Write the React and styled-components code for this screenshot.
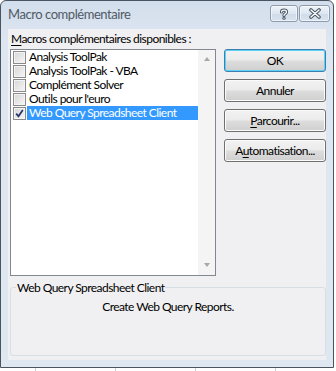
import React from 'react';
import styled, { createGlobalStyle } from 'styled-components';

const Global = createGlobalStyle`
  html, body { margin: 0; padding: 0; }
  body {
    width: 336px; height: 371px; overflow: hidden;
    background-color: #ffffff;
    background-image: repeating-linear-gradient(90deg, transparent 0 35px, #c9d2e0 35px 36px, transparent 36px 80px);
  }
`;

const Window = styled.div`
  box-sizing: border-box;
  width: 334px;
  height: 368px;
  border: 1px solid #4a545e;
  border-radius: 6px 6px 0 0;
  background: linear-gradient(#d3deec, #dde6f1 40px, #dfe7f1);
  display: flex;
  flex-direction: column;
  font-family: Lato, "Liberation Sans", sans-serif;
  font-size: 12px;
  letter-spacing: -0.55px;
  color: #000;
`;

const TitleBar = styled.div`
  height: 28px;
  flex: none;
  display: flex;
  align-items: flex-start;
  padding: 0 3px 0 7px;
`;

const Title = styled.div`
  font-size: 13px;
  letter-spacing: -0.45px;
  line-height: 27px;
  color: #4f5a66;
`;

const Controls = styled.div`
  margin-left: auto;
  margin-top: 4px;
  display: flex;
  gap: 1px;
`;

const CaptionButton = styled.div`
  box-sizing: border-box;
  width: ${p => p.$w}px;
  height: 17px;
  border: 1px solid #8c9bb0;
  border-radius: 3px;
  background: linear-gradient(#eef3f9, #dde6f1 50%, #cfdbea 51%, #d9e3ef);
  box-shadow: inset 0 0 0 1px rgba(255,255,255,0.6);
  display: flex;
  align-items: center;
  justify-content: center;
`;

const Frame = styled.div`
  flex: 1;
  display: flex;
  padding: 0 7px 7px 7px;
`;

const Client = styled.div`
  flex: 1;
  background: #f0f0f2;
  display: flex;
  flex-direction: column;
  padding: 0 0 4px 2px;
`;

const FieldLabel = styled.div`
  margin: 2px 0 3px 1px;
  line-height: 15px;
  height: 15px;
`;

const Key = styled.span`
  text-decoration: underline;
  text-underline-offset: 2px;
`;

const Main = styled.div`
  display: flex;
  gap: 8px;
  height: 227px;
  flex: none;
`;

const ListBox = styled.div`
  box-sizing: border-box;
  width: 206px;
  height: 227px;
  border: 1px solid #828790;
  background: #fff;
  display: flex;
`;

const Items = styled.div`
  flex: 1;
  display: flex;
  flex-direction: column;
`;

const Row = styled.div`
  height: 14px;
  display: flex;
  align-items: center;
  padding-left: 2px;
`;

const Box = styled.span`
  box-sizing: border-box;
  width: 13px;
  height: 13px;
  border: 1px solid #8a8a8a;
  background: linear-gradient(135deg, #d6d6d6, #f7f7f7);
  box-shadow: inset 0 0 0 1px #f4f4f4;
  margin-right: 1px;
  display: flex;
  align-items: center;
  justify-content: center;
  flex: none;
`;

const ItemText = styled.span`
  flex: 1;
  height: 14px;
  line-height: 14px;
  padding-left: 2px;
  white-space: nowrap;
  background: ${p => (p.$selected ? '#3399ff' : 'transparent')};
  color: ${p => (p.$selected ? '#ffffff' : '#000000')};
`;

const ScrollBar = styled.div`
  width: 17px;
  flex: none;
  background: #f4f4f4;
  display: flex;
  flex-direction: column;
  justify-content: space-between;
  align-items: center;
  padding: 7px 0 8px;
`;

const Arrow = styled.span`
  width: 0;
  height: 0;
  border-left: 3.5px solid transparent;
  border-right: 3.5px solid transparent;
  ${p => (p.$down ? 'border-top: 4px solid #a8a8a8;' : 'border-bottom: 4px solid #a8a8a8;')}
`;

const Buttons = styled.div`
  display: flex;
  flex-direction: column;
  gap: 7px;
  width: 102px;
`;

const Button = styled.button`
  box-sizing: border-box;
  width: 102px;
  height: 23px;
  padding: 0;
  border: 1px solid ${p => (p.$default ? '#3c7fb1' : '#707070')};
  border-radius: 3px;
  background: linear-gradient(#f2f2f2 0%, #ebebeb 48%, #dddddd 52%, #cfcfcf 100%);
  box-shadow: inset 0 0 0 1px ${p => (p.$default ? '#5fd0f5' : '#fbfbfb')};
  font-family: Lato, "Liberation Sans", sans-serif;
  font-size: 12px;
  letter-spacing: -0.55px;
  color: #000;
  line-height: 20px;
`;

const Group = styled.fieldset`
  flex: 1;
  margin: 4px 0 0 0;
  padding: 0;
  border: 1px solid #d5dfe5;
  border-radius: 3px;
  min-width: 0;
  display: flex;
  flex-direction: column;
`;

const Legend = styled.legend`
  margin-left: 5px;
  padding: 0 1px;
  line-height: 15px;
  font-size: 12px;
`;

const Description = styled.div`
  text-align: center;
  line-height: 15px;
  margin-top: 4px;
`;

const HelpIcon = () => (
  <svg width="12" height="12" viewBox="0 0 12 12">
    <path d="M3.5 4 C3.5 1.5 8.5 1.5 8.5 4 C8.5 5.8 6 5.6 6 7.5" fill="none" stroke="#4c5866" strokeWidth="3.2" strokeLinecap="round" />
    <path d="M3.5 4 C3.5 1.5 8.5 1.5 8.5 4 C8.5 5.8 6 5.6 6 7.5" fill="none" stroke="#ffffff" strokeWidth="1.2" strokeLinecap="round" />
    <circle cx="6" cy="10.2" r="1.6" fill="#4c5866" />
    <circle cx="6" cy="10.2" r="0.6" fill="#ffffff" />
  </svg>
);

const CloseIcon = () => (
  <svg width="14" height="11" viewBox="0 0 14 11">
    <path d="M3 2 L11 9 M11 2 L3 9" stroke="#4c5866" strokeWidth="3.6" strokeLinecap="round" />
    <path d="M3 2 L11 9 M11 2 L3 9" stroke="#ffffff" strokeWidth="1.4" strokeLinecap="round" />
  </svg>
);

const Check = () => (
  <svg width="9" height="9" viewBox="0 0 9 9">
    <path d="M1.2 4.6 L3.5 7.3 L7.8 1" fill="none" stroke="#27346b" strokeWidth="1.7" />
  </svg>
);

const addins = [
  { name: 'Analysis ToolPak', checked: false },
  { name: 'Analysis ToolPak - VBA', checked: false },
  { name: 'Complément Solver', checked: false },
  { name: "Outils pour l'euro", checked: false },
  { name: 'Web Query Spreadsheet Client', checked: true, selected: true },
];

export default function App() {
  return (
    <>
      <Global />
      <Window>
        <TitleBar>
          <Title>Macro complémentaire</Title>
          <Controls>
            <CaptionButton $w={28}><HelpIcon /></CaptionButton>
            <CaptionButton $w={31}><CloseIcon /></CaptionButton>
          </Controls>
        </TitleBar>
        <Frame>
          <Client>
            <FieldLabel><Key>M</Key>acros complémentaires disponibles :</FieldLabel>
            <Main>
              <ListBox>
                <Items>
                  {addins.map(a => (
                    <Row key={a.name}>
                      <Box>{a.checked && <Check />}</Box>
                      <ItemText $selected={a.selected}>{a.name}</ItemText>
                    </Row>
                  ))}
                </Items>
                <ScrollBar>
                  <Arrow />
                  <Arrow $down />
                </ScrollBar>
              </ListBox>
              <Buttons>
                <Button $default>OK</Button>
                <Button>Annuler</Button>
                <Button><Key>P</Key>arcourir...</Button>
                <Button>A<Key>u</Key>tomatisation...</Button>
              </Buttons>
            </Main>
            <Group>
              <Legend>Web Query Spreadsheet Client</Legend>
              <Description>Create Web Query Reports.</Description>
            </Group>
          </Client>
        </Frame>
      </Window>
    </>
  );
}
